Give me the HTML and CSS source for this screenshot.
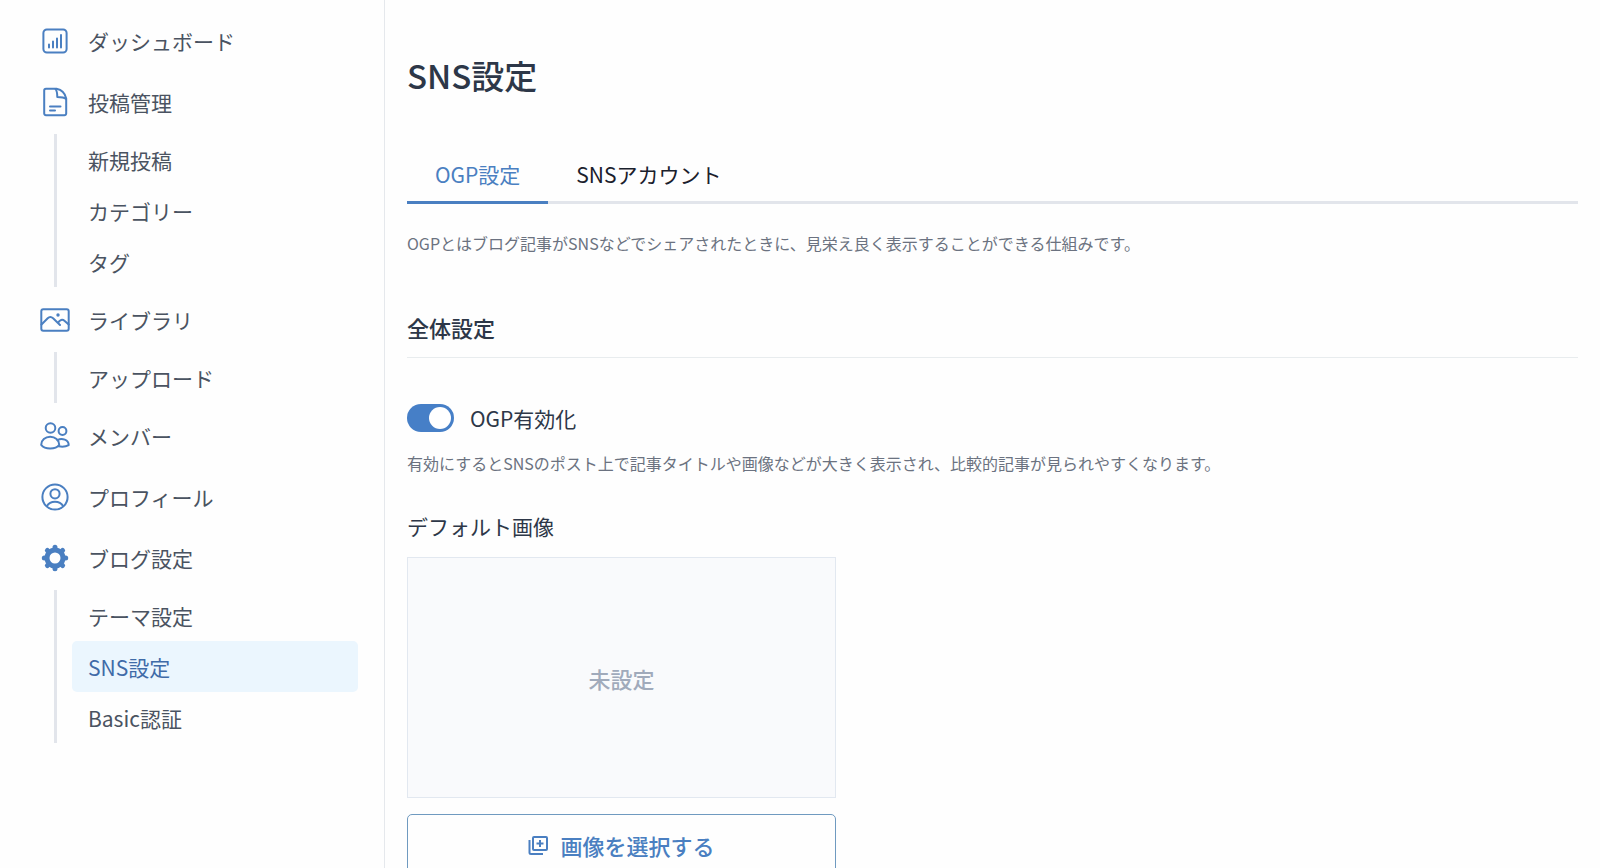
FILE: index.html
```html
<!DOCTYPE html>
<html lang="ja">
<head>
  <meta charset="utf-8">
  <title>SNS設定</title>
  <link rel="stylesheet" href="styles.css">
</head>
<body>
  <div class="layout">
    <nav class="sidebar">
      <ul class="menu">
        <li>
          <a class="menu-link" href="#">
            <svg class="icon" viewBox="0 0 30 30">
              <rect x="3.4" y="3.4" width="23.2" height="23.2" rx="3.5"/>
              <path d="M9 18.500v3M13 15.500v6M17 12.500v9M21 9v12.500"/>
            </svg>
            ダッシュボード
          </a>
        </li>
        <li>
          <a class="menu-link" href="#">
            <svg class="icon" viewBox="0 0 30 30">
              <path d="M6 1.800h10.500c5 1 8.700 5 9.700 9.700v15a1.800 1.800 0 0 1-1.800 1.800H6a1.800 1.800 0 0 1-1.800-1.800V3.600A1.800 1.800 0 0 1 6 1.800z"/>
              <path d="M15.500 2c1.600 2 1.800 4.500 1.800 8 3.500 0 6.700.2 8.700 2M10 19.500h10.500M10 23.500h5"/>
            </svg>
            投稿管理
          </a>
          <ul class="submenu">
            <li><a class="submenu-link" href="#">新規投稿</a></li>
            <li><a class="submenu-link" href="#">カテゴリー</a></li>
            <li><a class="submenu-link" href="#">タグ</a></li>
          </ul>
        </li>
        <li>
          <a class="menu-link" href="#">
            <svg class="icon" viewBox="0 0 30 30">
              <rect x="1.300" y="4.300" width="27.400" height="21.400" rx="2"/>
              <path d="M1.500 19.500l6.200-6.200c1.900-1.900 3.600-1.700 5.400 0l6.900 6.700M18 18c1.800-3.500 4.500-4 6.700-2l4 3.600"/>
              <circle class="fill" cx="18" cy="10" r="1.700"/>
            </svg>
            ライブラリ
          </a>
          <ul class="submenu">
            <li><a class="submenu-link" href="#">アップロード</a></li>
          </ul>
        </li>
        <li>
          <a class="menu-link" href="#">
            <svg class="icon" viewBox="0 0 30 30">
              <circle cx="10.500" cy="7" r="4.800"/>
              <circle cx="22.500" cy="10" r="3.900"/>
              <path d="M1.200 23.800c0-4.600 4-8 9-8s9 3.400 9 8c-2 2.700-5.500 3.600-9 3.600s-7-.9-9-3.600z"/>
              <path d="M17.500 19.200c4.500-2.800 11.200-.2 11.200 4.900-2.500 1.400-6.500 1.800-10 1.200"/>
            </svg>
            メンバー
          </a>
        </li>
        <li>
          <a class="menu-link" href="#">
            <svg class="icon" viewBox="0 0 30 30">
              <circle cx="15" cy="15" r="12.600"/>
              <circle cx="15" cy="11.800" r="4.600"/>
              <path d="M6.800 24.200c2-3.400 5-4.400 8.200-4.400s6.200 1 8.200 4.400"/>
            </svg>
            プロフィール
          </a>
        </li>
        <li>
          <a class="menu-link" href="#">
            <svg class="icon" viewBox="0 0 30 30">
              <circle cx="15" cy="15" r="8" stroke-width="5"/>
              <path stroke-width="5" d="M15 4.300v2M15 23.700v2M4.300 15h2M23.700 15h2M7.400 7.400l1.400 1.400M21.200 21.200l1.400 1.400M7.400 22.600l1.400-1.400M21.200 8.800l1.400-1.400"/>
            </svg>
            ブログ設定
          </a>
          <ul class="submenu">
            <li><a class="submenu-link" href="#">テーマ設定</a></li>
            <li><a class="submenu-link active" href="#">SNS設定</a></li>
            <li><a class="submenu-link" href="#">Basic認証</a></li>
          </ul>
        </li>
      </ul>
    </nav>

    <main class="content">
      <h1>SNS設定</h1>

      <div class="tabs" role="tablist">
        <button class="tab active" type="button" role="tab" aria-selected="true">OGP設定</button>
        <button class="tab" type="button" role="tab" aria-selected="false">SNSアカウント</button>
      </div>

      <p class="description">OGPとはブログ記事がSNSなどでシェアされたときに、見栄え良く表示することができる仕組みです。</p>

      <h2>全体設定</h2>

      <div class="switch-row">
        <input class="switch" type="checkbox" id="ogpEnabled" checked>
        <label for="ogpEnabled">OGP有効化</label>
      </div>
      <p class="help">有効にするとSNSのポスト上で記事タイトルや画像などが大きく表示され、比較的記事が見られやすくなります。</p>

      <h3>デフォルト画像</h3>
      <div class="image-field">
        <div class="preview">未設定</div>
        <button class="select-button" type="button">
          <svg class="button-icon" viewBox="0 0 20 20">
            <rect x="5" y="2" width="14" height="13" rx="1"/>
            <path d="M1.500 5v12.500a1.500 1.500 0 0 0 1.500 1.500h12M12 5v7M8.500 8.500h7"/>
          </svg>
          画像を選択する
        </button>
      </div>
    </main>
  </div>
</body>
</html>
```

FILE: styles.css
```css
* {
  box-sizing: border-box;
}

body {
  margin: 0;
  background-color: #fefefe;
  color: #2d3748;
  font-family: "Noto Sans CJK JP", sans-serif;
  font-size: 21px;
  line-height: 30px;
}

h1, h2, h3, p, ul {
  margin: 0;
  padding: 0;
}

ul {
  list-style: none;
}

a {
  color: inherit;
  text-decoration: none;
}

button {
  font-family: inherit;
  cursor: pointer;
}

.layout {
  display: flex;
  min-height: 100vh;
}

/* sidebar */
.sidebar {
  flex: 0 0 385px;
  padding-top: 13px;
  border-right: 1px solid #e5e8ec;
  color: #4a5361;
}

.menu {
  display: flex;
  flex-direction: column;
  gap: 5px;
}

.menu-link {
  display: flex;
  align-items: center;
  gap: 18px;
  height: 56px;
  padding-left: 40px;
}

.icon {
  width: 30px;
  height: 30px;
  fill: none;
  stroke: #4a7fc1;
  stroke-width: 2;
  stroke-linecap: round;
  stroke-linejoin: round;
}

.icon .fill {
  fill: #4a7fc1;
  stroke: none;
}

.submenu {
  margin: 4px 26px 0 54px;
  padding-left: 15px;
  border-left: 3px solid #e2e5eb;
}

.submenu-link {
  display: flex;
  align-items: center;
  height: 51px;
  padding: 0 16px;
  border-radius: 5px;
}

.submenu-link.active {
  background-color: #ebf6fe;
  color: #3f6ba8;
}

/* main */
.content {
  flex: 1;
  min-width: 0;
  padding: 51px 22px 40px;
}

h1 {
  font-size: 33px;
  font-weight: 500;
  line-height: 48px;
}

.tabs {
  display: flex;
  margin-top: 51px;
  border-bottom: 3px solid #e2e5eb;
}

.tab {
  margin-bottom: -3px;
  padding: 9px 28px 12px;
  border: 0;
  border-bottom: 3px solid transparent;
  background: none;
  color: #1a202c;
  font-size: 21px;
  line-height: 30px;
}

.tab.active {
  border-bottom-color: #4a7fc1;
  color: #4a7fc1;
}

.description,
.help {
  color: #6b7280;
  font-size: 16px;
  line-height: 28px;
}

.description {
  margin-top: 25px;
}

h2 {
  margin-top: 54px;
  padding-bottom: 14px;
  border-bottom: 1px solid #e8ecee;
  font-size: 22px;
  font-weight: 500;
  line-height: 32px;
}

.switch-row {
  display: flex;
  align-items: center;
  gap: 16px;
  margin-top: 45px;
}

.switch {
  appearance: none;
  display: flex;
  width: 47px;
  height: 28px;
  margin: 0;
  padding: 3px;
  border-radius: 14px;
  background-color: #cbd5e0;
  cursor: pointer;
}

.switch::before {
  content: "";
  width: 22px;
  height: 22px;
  border-radius: 50%;
  background-color: #fff;
}

.switch:checked {
  justify-content: flex-end;
  background-color: #467fc7;
}

.help {
  margin-top: 16px;
}

h3 {
  margin-top: 34px;
  font-size: 21px;
  font-weight: 400;
}

.image-field {
  display: flex;
  flex-direction: column;
  gap: 16px;
  max-width: 429px;
  margin-top: 16px;
}

.preview {
  display: flex;
  align-items: center;
  justify-content: center;
  height: 241px;
  border: 1px solid #e2e8f0;
  background-color: #f9fafc;
  color: #a0aabb;
  font-size: 22px;
  font-weight: 500;
}

.select-button {
  display: flex;
  align-items: center;
  justify-content: center;
  gap: 12px;
  height: 62px;
  border: 1px solid #6f9ac0;
  border-radius: 5px;
  background-color: #fefefe;
  color: #4a7fc1;
  font-size: 22px;
  font-weight: 500;
}

.button-icon {
  width: 20px;
  height: 20px;
  fill: none;
  stroke: #4a7fc1;
  stroke-width: 2;
}
```
